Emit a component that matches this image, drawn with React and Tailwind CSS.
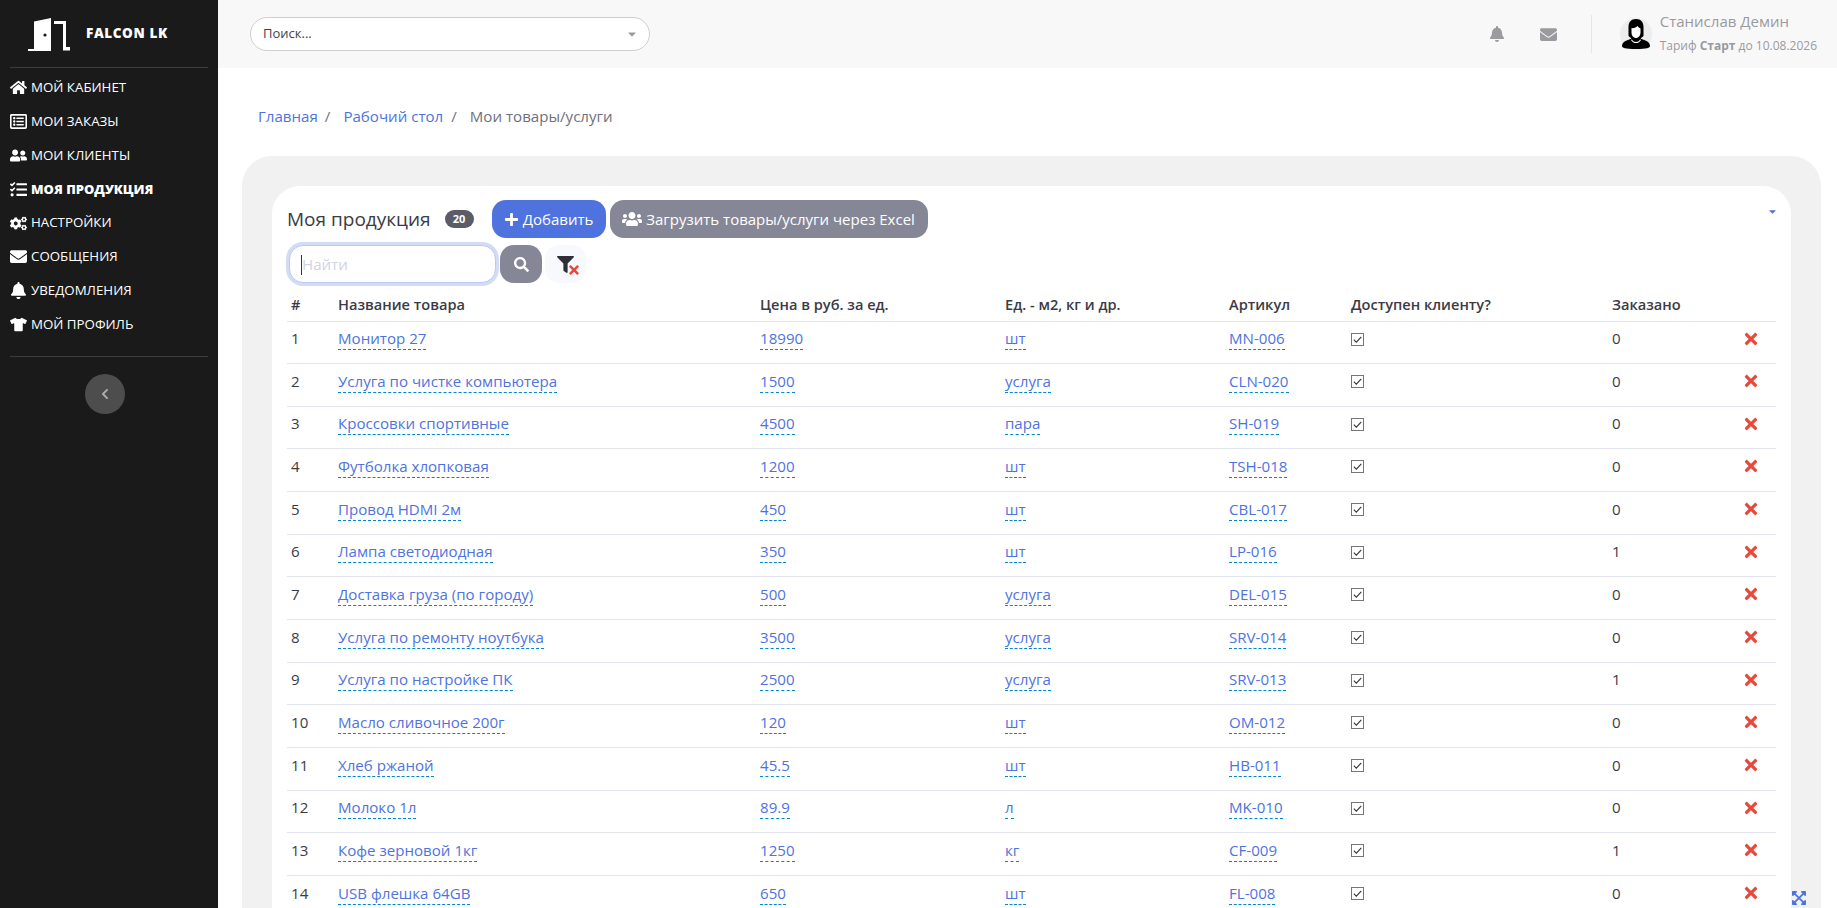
import React from "react";
import { FaHome, FaRegListAlt, FaUserFriends, FaTasks, FaCogs, FaEnvelope, FaBell, FaTshirt, FaChevronLeft, FaPlus, FaUsers, FaSearch, FaFilter, FaTimes, FaExpandArrowsAlt, FaCaretDown } from "react-icons/fa";

const menu = [
  [FaHome, "МОЙ КАБИНЕТ"],
  [FaRegListAlt, "МОИ ЗАКАЗЫ"],
  [FaUserFriends, "МОИ КЛИЕНТЫ"],
  [FaTasks, "МОЯ ПРОДУКЦИЯ", true],
  [FaCogs, "НАСТРОЙКИ"],
  [FaEnvelope, "СООБЩЕНИЯ"],
  [FaBell, "УВЕДОМЛЕНИЯ"],
  [FaTshirt, "МОЙ ПРОФИЛЬ"],
];
const rows = [
  ["Монитор 27", "18990", "шт", "MN-006", 0],
  ["Услуга по чистке компьютера", "1500", "услуга", "CLN-020", 0],
  ["Кроссовки спортивные", "4500", "пара", "SH-019", 0],
  ["Футболка хлопковая", "1200", "шт", "TSH-018", 0],
  ["Провод HDMI 2м", "450", "шт", "CBL-017", 0],
  ["Лампа светодиодная", "350", "шт", "LP-016", 1],
  ["Доставка груза (по городу)", "500", "услуга", "DEL-015", 0],
  ["Услуга по ремонту ноутбука", "3500", "услуга", "SRV-014", 0],
  ["Услуга по настройке ПК", "2500", "услуга", "SRV-013", 1],
  ["Масло сливочное 200г", "120", "шт", "OM-012", 0],
  ["Хлеб ржаной", "45.5", "шт", "HB-011", 0],
  ["Молоко 1л", "89.9", "л", "MK-010", 0],
  ["Кофе зерновой 1кг", "1250", "кг", "CF-009", 1],
  ["USB флешка 64GB", "650", "шт", "FL-008", 0],
];

function Editable({ children }) {
  return <a className="text-[#4e73df] border-b border-dashed border-[#0088cc] leading-[22px] inline-block">{children}</a>;
}

function Logo() {
  return (
    <svg width="42" height="34" viewBox="0 0 42 34" className="shrink-0">
      <path fill="#fff" d="M0 32h6V4.500L23 1v31h0v2H0z" />
      <circle cx="17" cy="18" r="1.600" fill="#1a1a1a" />
      <path fill="#fff" d="M26 4h12v26h4v3.500h-7V7h-9z" />
    </svg>
  );
}

function Avatar() {
  return (
    <div className="w-8 h-8 rounded-full bg-[#ededed] flex items-center justify-center shrink-0">
      <svg width="28" height="30" viewBox="0 0 28 30">
        <path fill="#000" d="M14 0c5 0 7.500 3 7.500 8v9l-3 2.500 6 2.500c2.500 1 3.500 3 3.500 5 0 2-3 3-14 3S0 29 0 27c0-2 1-4 3.500-5l6-2.500-3-2.500V8C6.500 3 9 0 14 0z" />
        <path fill="#fff" d="M9.500 9c2 .5 5-.5 6-2 1 1.500 2.500 2 3 2.500v4c0 3-2 5.500-4.500 5.500S9.500 16.500 9.500 13.500z" />
        <path fill="#fff" d="M9.800 20.500c1 1.700 2.500 2.500 4.200 2.500s3.200-.8 4.200-2.500l.8.400c-1 2.100-3 3.100-5 3.100s-4-1-5-3.100z" />
      </svg>
    </div>
  );
}

function Check() {
  return (
    <svg width="13" height="13" viewBox="0 0 13 13" className="block">
      <rect x=".5" y=".5" width="12" height="12" fill="#fff" stroke="#767676" />
      <path d="M2.800 6.600l2.500 2.500 5-5.300" fill="none" stroke="#333" strokeWidth="1.100" />
    </svg>
  );
}

export default function App() {
  return (
    <div className="flex h-screen overflow-hidden bg-white text-[#3a3b45] text-[15.1px]" style={{ fontFamily: '"Open Sans", "Noto Sans", sans-serif' }}>
      <aside className="w-[218px] shrink-0 bg-[#1a1a1a] text-white flex flex-col px-[10px]">
        <div className="h-[68px] shrink-0 flex items-center pl-[18px] gap-[16px] border-b border-[#3d3d3d]">
          <Logo />
          <span className="font-extrabold text-[13.5px] tracking-[0.6px]">FALCON LK</span>
        </div>
        <nav className="flex flex-col pt-[3px] pb-[15px] border-b border-[#3d3d3d]">
          {menu.map(([Icon, label, active]) => (
            <div key={label} className={`h-[33.8px] flex items-center ${active ? "font-extrabold text-[13px]" : "text-[13.3px]"}`}>
              <span className="w-[21px] flex justify-start shrink-0"><Icon size={17} /></span>
              <span>{label}</span>
            </div>
          ))}
        </nav>
        <div className="flex justify-center pt-[17px] pr-[8px]">
          <div className="w-10 h-10 rounded-full bg-[#4d4d4d] flex items-center justify-center text-[#adadad]"><FaChevronLeft size={12} /></div>
        </div>
      </aside>

      <div className="flex-1 min-w-0 flex flex-col">
        <header className="h-[68px] shrink-0 bg-[#f8f8f8] flex items-center pl-[32px] pr-[20px]">
          <div className="w-[400px] h-[34px] rounded-[17px] bg-white border border-[#cfcfcf] flex items-center justify-between pl-[12px] pr-[11px] text-[13px] text-[#444]">
            <span>Поиск...</span>
            <FaCaretDown size={12} className="text-[#999]" />
          </div>
          <div className="ml-auto flex items-center">
            <FaBell size={16} className="text-[#9a9a9f] mr-[35px]" />
            <FaEnvelope size={17} className="text-[#9a9a9f] mr-[34px]" />
            <div className="w-px h-[38px] bg-[#e3e6f0] mr-[28px]" />
            <Avatar />
            <div className="ml-[8px] flex flex-col">
              <span className="text-[15px] leading-[19px] text-[#9a9a9f]">Станислав Демин</span>
              <span className="text-[12px] leading-[20px] mt-[5px] text-[#9a9a9f]">Тариф <b>Старт</b> до 10.08.2026</span>
            </div>
          </div>
        </header>

        <main className="flex-1 min-h-0 pl-[24px] pr-[16px]">
          <div className="h-[88px] flex items-center pl-[16px] pt-[8px] text-[15.1px]">
            <span className="text-[#4e73df]">Главная</span>
            <span className="text-[#6e707e] ml-[7px] mr-[13px]">/</span>
            <span className="text-[#4e73df]">Рабочий стол</span>
            <span className="text-[#6e707e] ml-[8px] mr-[13px]">/</span>
            <span className="text-[#6e707e]">Мои товары/услуги</span>
          </div>
          <div className="bg-[#f1f1f1] rounded-t-[30px] pt-[30px] px-[30px]">
            <div className="relative bg-white rounded-t-[28px] pt-[14px] pl-[15px] pr-[15px]">
              <FaCaretDown size={11} className="absolute right-[13px] top-[20px] text-[#4e73df]" />
              <div className="flex items-center h-[38px]">
                <span className="text-[19px] text-[#3a3b45]">Моя продукция</span>
                <span className="ml-[14px] w-[29px] h-[18px] rounded-full bg-[#5a5c69] text-white text-[11px] font-bold flex items-center justify-center">20</span>
                <button className="ml-[18px] h-[38px] w-[114px] rounded-[14px] bg-[#4e73df] text-white text-[15px] flex items-center justify-center gap-[4px]"><FaPlus size={15} />Добавить</button>
                <button className="ml-[4px] h-[38px] w-[318px] rounded-[14px] bg-[#858796] text-white text-[15px] flex items-center justify-center gap-[4px]"><FaUsers size={20} />Загрузить товары/услуги через Excel</button>
              </div>
              <div className="flex items-center mt-[7px] h-[38px] pl-[2px]">
                <div className="w-[207px] h-[38px] rounded-[14px] bg-white border border-[#bac8f3] ring-[3px] ring-[#d3dcf7] flex items-center pl-[11px] text-[15.1px] text-[#d1d3e2] pt-[1px]">
                  <span className="w-px h-[20px] bg-[#333]" />Найти
                </div>
                <button className="ml-[4px] w-[42px] h-[38px] rounded-[14px] bg-[#858796] text-white flex items-center justify-center"><FaSearch size={15} /></button>
                <button className="relative ml-[3px] w-[41px] h-[38px] rounded-[14px] bg-[#f8f9fc] flex items-center justify-center">
                  <FaFilter size={17} className="text-[#2f2f37]" />
                  <FaTimes size={14} className="absolute left-[22px] top-[18px] text-[#e74a3b]" />
                </button>
              </div>
              <table className="w-full mt-[4px] table-fixed border-collapse">
                <colgroup>
                  <col className="w-[51px]" /><col className="w-[422px]" /><col className="w-[245px]" /><col className="w-[224px]" /><col className="w-[122px]" /><col className="w-[261px]" /><col className="w-[139px]" /><col />
                </colgroup>
                <thead>
                  <tr className="h-[34px] border-b border-[#e3e6f0] text-left text-[14.6px]">
                    <th className="pl-[4px] pt-[2px] font-semibold">#</th>
                    <th className="pt-[2px] font-semibold">Название товара</th>
                    <th className="pt-[2px] font-semibold">Цена в руб. за ед.</th>
                    <th className="pt-[2px] font-semibold">Ед. - м2, кг и др.</th>
                    <th className="pt-[2px] font-semibold">Артикул</th>
                    <th className="pt-[2px] font-semibold">Доступен клиенту?</th>
                    <th className="pt-[2px] font-semibold">Заказано</th>
                    <th />
                  </tr>
                </thead>
                <tbody>
                  {rows.map((r, i) => (
                    <tr key={i} className="h-[42.67px] border-b border-[#e3e6f0]">
                      <td className="pl-[4px] align-top pt-[5.5px] leading-[22px]">{i + 1}</td>
                      <td className="align-top pt-[5.5px]"><Editable>{r[0]}</Editable></td>
                      <td className="align-top pt-[5.5px]"><Editable>{r[1]}</Editable></td>
                      <td className="align-top pt-[5.5px]"><Editable>{r[2]}</Editable></td>
                      <td className="align-top pt-[5.5px]"><Editable>{r[3]}</Editable></td>
                      <td className="align-top pt-[11px]"><Check /></td>
                      <td className="align-top pt-[5.5px] leading-[22px]">{r[4]}</td>
                      <td className="align-top pt-[8px]"><FaTimes size={18} className="text-[#e74a3b] ml-[-9px]" /></td>
                    </tr>
                  ))}
                </tbody>
              </table>
            </div>
          </div>
        </main>
      </div>
      <FaExpandArrowsAlt size={16} className="absolute left-[1791px] top-[890px] text-[#4e73df]" />
    </div>
  );
}
